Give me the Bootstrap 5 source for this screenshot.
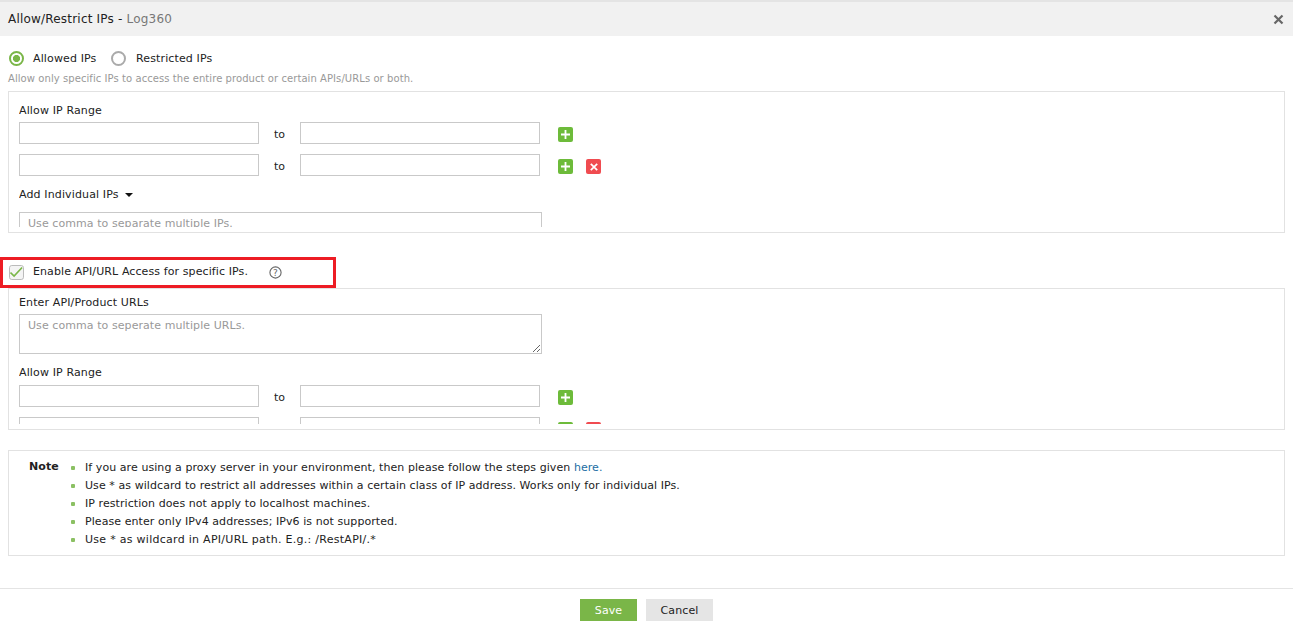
<!DOCTYPE html>
<html lang="en">
<head>
<meta charset="utf-8">
<title>Allow/Restrict IPs - Log360</title>
<link rel="stylesheet" href="https://cdn.jsdelivr.net/npm/bootstrap@5.3.0/dist/css/bootstrap.min.css">
<style>
html,body{height:627px;overflow:hidden;}
body{font-family:"DejaVu Sans",Verdana,sans-serif;font-size:11px;line-height:14px;letter-spacing:.07px;color:#222;background:#fff;}
.dlg-head{height:34px;margin-top:2px;background:#f1f1f1;padding:0 8px;box-shadow:0 -2px 0 #e4e4e4;}
.dlg-title{font-size:12px;letter-spacing:.2px;color:#222;}
.dlg-title span{color:#777;}
.dlg-close{background:none;border:0;padding:0;width:11px;height:11px;display:block;margin-right:1px;}
.dlg-main{padding:0 8px;}
.choice-row{height:16px;margin-top:14px;padding-left:1px;}
.choice-row .form-check-input,.check-wrap .form-check-input{width:15px;height:15px;margin:0;flex:none;}
.pick{border:2px solid #aaa;background:#fff;}
.pick:checked{border-color:#7ab648;background:radial-gradient(circle,#7ab648 0 3.2px,#fff 3.9px);}
.choice-lbl{padding-top:2px;margin-left:9px;letter-spacing:.13px;}
.choice-a{margin-right:14px;width:64px;white-space:nowrap;}
.choice-b{margin-left:10px;}
.tick{border-radius:0;border:1px solid #bbb;background-color:#f4f4f4;}
.tick:checked{border-color:#bbb;background-color:#f4f4f4;background-image:url("data:image/svg+xml,%3Csvg xmlns='http://www.w3.org/2000/svg' viewBox='0 0 15 15'%3E%3Cpath d='M1.5 7.5l3.6 3.6 8-8.6' fill='none' stroke='%237ab648' stroke-width='1.6'/%3E%3C/svg%3E");background-size:15px 15px;}
.hint{color:#999;font-size:10px;margin-top:6px;height:14px;line-height:14px;margin-bottom:5px;}
.pane{border:1px solid #e2e2e2;padding:0 10px 5px;}
.pane-in{overflow:hidden;height:135px;}
.lbl{height:14px;line-height:14px;letter-spacing:.13px;}
.pane-a .first-lbl{margin-top:12px;margin-bottom:4px;}
.ip-row{height:22px;margin-bottom:10px;}
.ip-box{width:240px;height:22px;border:1px solid #c9c9c9;border-radius:0;padding:0 8px;font-size:11px;}
.ip-to{width:41px;text-align:center;margin-top:4px;}
.act{width:15px;height:15px;border:0;padding:0;border-radius:2px;display:flex;align-items:center;justify-content:center;margin-top:3px;}
.act-add{background:#6dbb3a;margin-left:18px;}
.act-del{background:#f04b50;margin-left:13px;}
.add-more{margin-top:12px;margin-bottom:10px;}
.caret-down{display:inline-block;margin-left:3px;border-left:4px solid transparent;border-right:4px solid transparent;border-top:4px solid #111;vertical-align:1px;}
.area{display:block;width:523px;border:1px solid #c9c9c9;border-radius:0;padding:4px 8px;font-size:11px;line-height:14px;letter-spacing:.07px;}
.area::placeholder,.ip-box::placeholder{color:#999;}
.area-one{height:40px;resize:none;}
.area-two{height:40px;resize:vertical;}
.red-frame{width:336px;height:31px;border:3px solid #ed1c24;margin-left:-8px;margin-top:24px;padding-left:6px;}
.chk-lbl{margin-left:9px;padding-bottom:2px;letter-spacing:.1px;white-space:nowrap;}
.help-dot{width:13px;height:13px;margin-left:21px;margin-bottom:1px;}
.pane-b .first-lbl{margin-top:7px;margin-bottom:4px;}
.pane-b .lbl-next{margin-top:12px;margin-bottom:5px;}
.memo{border:1px solid #e2e2e2;margin-top:20px;height:106px;padding:7px 0 0 20px;}
.memo-h{font-weight:700;width:42px;flex:none;height:18px;line-height:18px;}
.memo-list{list-style:none;padding:0;margin:0;}
.memo-list li{position:relative;height:18px;line-height:19px;padding-left:14px;}
.memo-list li::before{content:"";position:absolute;left:0;top:8px;width:4px;height:4px;background:#8bc063;border-radius:1px;}
.memo-list li.memo-wide{letter-spacing:.28px;}
.memo-list a{color:#1c6ea4;text-decoration:none;}
.dlg-foot{margin-top:32px;border-top:1px solid #e4e4e4;padding-top:10px;}
.b-save,.b-cancel{height:22px;border:0;border-radius:0;font-size:11px;line-height:14px;padding:1px 0 0;letter-spacing:.1px;}
.b-save{width:57px;background:#7ab648;color:#fff;}
.b-cancel{width:67px;background:#e5e5e5;color:#222;margin-left:9px;}
</style>
</head>
<body>
<div class="dlg-head d-flex align-items-center justify-content-between">
  <div class="dlg-title">Allow/Restrict IPs - <span>Log360</span></div>
  <button class="dlg-close" type="button" aria-label="Close"><svg width="11" height="11" viewBox="0 0 11 11" class="d-block"><path d="M1.5 1.5l8 8M9.5 1.5l-8 8" stroke="#666" stroke-width="2.2" fill="none"/></svg></button>
</div>
<div class="dlg-main">
  <div class="choice-row d-flex align-items-center">
    <input class="form-check-input pick" type="radio" name="mode" id="m1" checked>
    <label for="m1" class="choice-lbl choice-a">Allowed IPs</label>
    <input class="form-check-input pick" type="radio" name="mode" id="m2">
    <label for="m2" class="choice-lbl choice-b">Restricted IPs</label>
  </div>
  <div class="hint">Allow only specific IPs to access the entire product or certain APIs/URLs or both.</div>

  <div class="pane pane-a"><div class="pane-in">
    <div class="lbl first-lbl">Allow IP Range</div>
    <div class="ip-row d-flex align-items-center">
      <input class="ip-box form-control" type="text"><span class="ip-to">to</span><input class="ip-box form-control" type="text">
      <button class="act act-add" type="button" aria-label="Add"><svg width="9" height="9" viewBox="0 0 9 9"><path d="M4.5 0v9M0 4.5h9" stroke="#fff" stroke-width="1.8"/></svg></button>
    </div>
    <div class="ip-row d-flex align-items-center">
      <input class="ip-box form-control" type="text"><span class="ip-to">to</span><input class="ip-box form-control" type="text">
      <button class="act act-add" type="button" aria-label="Add"><svg width="9" height="9" viewBox="0 0 9 9"><path d="M4.5 0v9M0 4.5h9" stroke="#fff" stroke-width="1.8"/></svg></button>
      <button class="act act-del" type="button" aria-label="Remove"><svg width="8" height="8" viewBox="0 0 8 8"><path d="M.8.8l6.4 6.4M7.2.8L.8 7.2" stroke="#fff" stroke-width="1.7"/></svg></button>
    </div>
    <div class="lbl add-more">Add Individual IPs <span class="caret-down"></span></div>
    <textarea class="area area-one form-control" placeholder="Use comma to separate multiple IPs."></textarea>
  </div></div>

  <div class="red-frame check-wrap d-flex align-items-center">
    <input class="form-check-input tick" type="checkbox" id="api" checked>
    <label for="api" class="chk-lbl">Enable API/URL Access for specific IPs.</label>
    <svg class="help-dot" viewBox="0 0 13 13"><circle cx="6.5" cy="6.5" r="5.6" fill="none" stroke="#666" stroke-width="1.1"/><text x="6.5" y="9.6" text-anchor="middle" font-size="9" font-family="DejaVu Sans" fill="#666">?</text></svg>
  </div>

  <div class="pane pane-b"><div class="pane-in">
    <div class="lbl first-lbl">Enter API/Product URLs</div>
    <textarea class="area area-two form-control" placeholder="Use comma to seperate multiple URLs."></textarea>
    <div class="lbl lbl-next">Allow IP Range</div>
    <div class="ip-row d-flex align-items-center">
      <input class="ip-box form-control" type="text"><span class="ip-to">to</span><input class="ip-box form-control" type="text">
      <button class="act act-add" type="button" aria-label="Add"><svg width="9" height="9" viewBox="0 0 9 9"><path d="M4.5 0v9M0 4.5h9" stroke="#fff" stroke-width="1.8"/></svg></button>
    </div>
    <div class="ip-row d-flex align-items-center">
      <input class="ip-box form-control" type="text"><span class="ip-to">to</span><input class="ip-box form-control" type="text">
      <button class="act act-add" type="button" aria-label="Add"><svg width="9" height="9" viewBox="0 0 9 9"><path d="M4.5 0v9M0 4.5h9" stroke="#fff" stroke-width="1.8"/></svg></button>
      <button class="act act-del" type="button" aria-label="Remove"><svg width="8" height="8" viewBox="0 0 8 8"><path d="M.8.8l6.4 6.4M7.2.8L.8 7.2" stroke="#fff" stroke-width="1.7"/></svg></button>
    </div>
  </div></div>

  <div class="memo d-flex">
    <div class="memo-h">Note</div>
    <ul class="memo-list">
      <li>If you are using a proxy server in your environment, then please follow the steps given <a href="#">here.</a></li>
      <li>Use * as wildcard to restrict all addresses within a certain class of IP address. Works only for individual IPs.</li>
      <li>IP restriction does not apply to localhost machines.</li>
      <li>Please enter only IPv4 addresses; IPv6 is not supported.</li>
      <li class="memo-wide">Use * as wildcard in API/URL path. E.g.: /RestAPI/.*</li>
    </ul>
  </div>
</div>
<div class="dlg-foot d-flex justify-content-center">
  <button class="btn b-save" type="button">Save</button>
  <button class="btn b-cancel" type="button">Cancel</button>
</div>
<script src="https://cdn.jsdelivr.net/npm/bootstrap@5.3.0/dist/js/bootstrap.bundle.min.js"></script>
</body>
</html>
